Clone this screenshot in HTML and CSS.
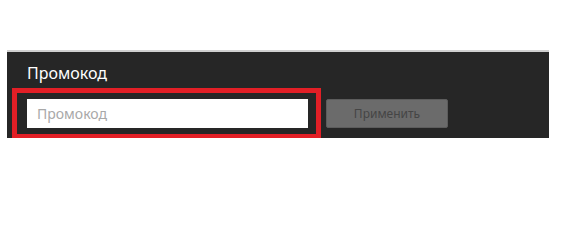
FILE: index.html
```html
<!DOCTYPE html>
<html lang="ru">
<head>
<meta charset="utf-8">
<link rel="stylesheet" href="styles.css">
</head>
<body>
<div class="page">
  <section class="promo">
    <div class="promo-title">Промокод</div>
    <div class="promo-row">
      <input class="promo-input" type="text" placeholder="Промокод">
      <button class="promo-btn" type="button">Применить</button>
    </div>
    <div class="highlight"></div>
  </section>
</div>
</body>
</html>
```

FILE: styles.css
```css
html, body {
  margin: 0;
  padding: 0;
  background: #ffffff;
}
.page {
  padding-top: 50px;
  padding-left: 7px;
  width: 542px;
}
.promo {
  position: relative;
  background: #262626;
  border-top: 2px solid #cfcfcf;
  padding: 11px 20px 10px 20px;
  font-family: "Noto Sans", "Open Sans", sans-serif;
}
.promo-title {
  color: #ffffff;
  font-size: 16px;
  line-height: 20px;
  margin-bottom: 16px;
}
.promo-row {
  display: flex;
  gap: 18px;
  align-items: stretch;
}
.promo-input {
  box-sizing: border-box;
  width: 281px;
  height: 29px;
  border: 0;
  margin: 0;
  padding: 0 10px;
  background: #ffffff;
  font-family: "Noto Sans", sans-serif;
  font-size: 14px;
  color: #333;
  outline: none;
}
.promo-input::placeholder {
  color: #a8a8a8;
}
.promo-btn {
  box-sizing: border-box;
  width: 122px;
  height: 29px;
  margin: 0;
  padding: 0;
  border: 1px solid #5c5c5c;
  border-radius: 2px;
  background: #6b6b6b;
  color: #454545;
  font-family: "Noto Sans", sans-serif;
  font-size: 12px;
}
.highlight {
  position: absolute;
  left: 5px;
  top: 36px;
  width: 299px;
  height: 41px;
  border: 5px solid #e21f26;
  pointer-events: none;
}
```
